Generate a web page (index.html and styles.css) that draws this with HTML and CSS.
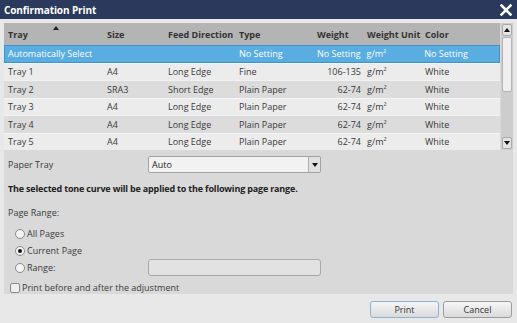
FILE: index.html
```html
<!DOCTYPE html>
<html>
<head>
<meta charset="utf-8">
<link rel="stylesheet" href="styles.css">
</head>
<body>
<div class="dialog">
  <div class="titlebar">
    <span class="title">Confirmation Print</span>
    <svg class="close" width="12" height="12" viewBox="0 0 12 12"><path d="M1.5 1.5 L10.5 10.5 M10.5 1.5 L1.5 10.5" stroke="#fff" stroke-width="2.6" stroke-linecap="square"/></svg>
  </div>
  <div class="body">
    <div class="panel">
      <div class="tablearea">
        <div class="table">
          <div class="row head">
            <div class="c c1">Tray<span class="sort"></span></div>
            <div class="c c2">Size</div>
            <div class="c c3">Feed Direction</div>
            <div class="c c4">Type</div>
            <div class="c c5 hw">Weight</div>
            <div class="c c6">Weight Unit</div>
            <div class="c c7">Color</div>
          </div>
          <div class="row sel">
            <div class="c c1">Automatically Select</div>
            <div class="c c2"></div>
            <div class="c c3"></div>
            <div class="c c4">No Setting</div>
            <div class="c c5 num">No Setting</div>
            <div class="c c6">g/m²</div>
            <div class="c c7">No Setting</div>
          </div>
          <div class="row light">
            <div class="c c1">Tray 1</div><div class="c c2">A4</div><div class="c c3">Long Edge</div><div class="c c4">Fine</div><div class="c c5 num">106-135</div><div class="c c6">g/m²</div><div class="c c7">White</div>
          </div>
          <div class="row dark">
            <div class="c c1">Tray 2</div><div class="c c2">SRA3</div><div class="c c3">Short Edge</div><div class="c c4">Plain Paper</div><div class="c c5 num">62-74</div><div class="c c6">g/m²</div><div class="c c7">White</div>
          </div>
          <div class="row light">
            <div class="c c1">Tray 3</div><div class="c c2">A4</div><div class="c c3">Long Edge</div><div class="c c4">Plain Paper</div><div class="c c5 num">62-74</div><div class="c c6">g/m²</div><div class="c c7">White</div>
          </div>
          <div class="row dark">
            <div class="c c1">Tray 4</div><div class="c c2">A4</div><div class="c c3">Long Edge</div><div class="c c4">Plain Paper</div><div class="c c5 num">62-74</div><div class="c c6">g/m²</div><div class="c c7">White</div>
          </div>
          <div class="row light">
            <div class="c c1">Tray 5</div><div class="c c2">A4</div><div class="c c3">Long Edge</div><div class="c c4">Plain Paper</div><div class="c c5 num">62-74</div><div class="c c6">g/m²</div><div class="c c7">White</div>
          </div>
        </div>
        <div class="scrollbar">
          <div class="sbtn"><span class="tri up"></span></div>
          <div class="thumb"></div>
          <div class="track"></div>
          <div class="sbtn"><span class="tri down"></span></div>
        </div>
      </div>
      <div class="form">
        <div class="line tray">
          <span class="label">Paper Tray</span>
          <div class="select"><span class="val">Auto</span><span class="arrow"><span class="tri down"></span></span></div>
        </div>
        <div class="note">The selected tone curve will be applied to the following page range.</div>
        <div class="pr">Page Range:</div>
        <div class="radio first"><span class="dot"></span>All Pages</div>
        <div class="radio"><span class="dot on"></span>Current Page</div>
        <div class="radio"><span class="rl"><span class="dot"></span>Range:</span><span class="input"></span></div>
        <div class="check"><span class="box"></span>Print before and after the adjustment</div>
      </div>
    </div>
    <div class="buttons">
      <button class="btn primary">Print</button>
      <button class="btn">Cancel</button>
    </div>
  </div>
</div>
</body>
</html>
```

FILE: styles.css
```css
* { box-sizing: border-box; }
html, body { margin: 0; padding: 0; }
body {
  width: 517px;
  height: 323px;
  overflow: hidden;
  background: #e8e8e8;
  font-family: "Open Sans", "Noto Sans", sans-serif;
  font-size: 9px;
  color: #3a3a3a;
}
.dialog { display: flex; flex-direction: column; height: 323px; }
.titlebar {
  height: 19px;
  background: #2b3a5c;
  color: #fff;
  display: flex;
  align-items: center;
  justify-content: space-between;
  padding: 0 5px 0 4px;
}
.title { font-weight: 700; font-size: 10px; letter-spacing: -0.1px; }
.close { display: block; }
.body { padding: 4px 4px 0 4px; flex: 1; display: flex; flex-direction: column; }
.panel { background: #d9d9d9; height: 271px; }
.tablearea { display: flex; gap: 1px; }
.table { width: 496px; }
.row { display: flex; height: 17.5px; align-items: center; }
.row.head { height: 22px; background: #b4b4b4; font-weight: 700; color: #333; position: relative; }
.row.sel { background: #59ade0; color: #fff; border: 1px solid #3f93cc; }
.row.light { background: #ececec; border-top: 1px solid #f6f6f6; }
.row.dark { background: #dcdcdc; border-top: 1px solid #f2f2f2; }
.c { padding-left: 4px; white-space: nowrap; }
.c1 { width: 99px; }
.c2 { width: 61px; }
.c3 { width: 71px; }
.c4 { width: 78px; }
.c5 { width: 50px; }
.c5.num { text-align: right; padding-left: 0; padding-right: 2px; }
.c6 { width: 58px; }
.c7 { width: 79px; }
.sel .c1 { padding-left: 3px; }
.sort {
  position: absolute;
  left: 49px;
  top: 3px;
  width: 0; height: 0;
  border-left: 3.5px solid transparent;
  border-right: 3.5px solid transparent;
  border-bottom: 4px solid #222;
}
.scrollbar {
  width: 13px;
  height: 127px;
  background: #cdcdcd;
  display: flex;
  flex-direction: column;
  padding: 1px;
  gap: 1px;
}
.sbtn {
  height: 12px;
  background: #e4e4e4;
  border: 1px solid #a9a9a9;
  border-radius: 2px;
  display: flex;
  align-items: center;
  justify-content: center;
}
.thumb {
  height: 55px;
  background: #efefef;
  border: 1px solid #b4b4b4;
  border-radius: 2px;
}
.track { flex: 1; }
.tri { width: 0; height: 0; border-left: 3px solid transparent; border-right: 3px solid transparent; }
.tri.up { border-bottom: 4px solid #111; }
.tri.down { border-top: 4px solid #111; }
.form { padding: 6px 0 0 4px; }
.line.tray { display: flex; align-items: center; height: 17px; }
.label { width: 140px; }
.select {
  width: 173px;
  height: 17px;
  background: #f2f2f2;
  border: 1px solid #a3a3a3;
  border-radius: 2px;
  display: flex;
  align-items: center;
  justify-content: space-between;
}
.val { padding-left: 3px; color: #222; }
.arrow {
  width: 12px;
  height: 15px;
  border-left: 1px solid #b0b0b0;
  background: #e0e0e0;
  display: flex;
  align-items: center;
  justify-content: center;
}
.note { font-weight: 700; color: #222; margin-top: 8px; height: 16px; line-height: 16px; letter-spacing: -0.18px; }
.pr { margin-top: 8px; height: 16px; line-height: 16px; }
.radio { display: flex; align-items: center; height: 17px; padding-left: 7px; }
.radio.first { margin-top: 4px; }
.dot {
  width: 10px; height: 10px;
  border-radius: 50%;
  border: 1px solid #8a8a8a;
  background: #f4f4f4;
  margin-right: 2px;
  display: flex;
  align-items: center;
  justify-content: center;
}
.dot.on::after { content: ""; width: 4px; height: 4px; border-radius: 50%; background: #111; }
.rl { display: flex; align-items: center; width: 133px; }
.input {
  width: 173px;
  height: 17px;
  background: #e2e2e2;
  border: 1px solid #a8a8a8;
  border-radius: 3px;
}
.check { display: flex; align-items: center; height: 17px; margin-top: 3px; padding-left: 3px; margin-left: -1px; }
.box {
  width: 10px; height: 10px;
  border: 1px solid #8a8a8a;
  background: #f0f0f0;
  border-radius: 2px;
  margin-right: 2px;
}
.buttons { display: flex; justify-content: flex-end; gap: 4px; padding-top: 7px; padding-right: 1px; }
.btn {
  width: 69px;
  height: 17px;
  font-family: inherit;
  font-size: 9px;
  color: #333;
  background: linear-gradient(#f6f6f6, #dadada);
  border: 1px solid #9c9c9c;
  border-radius: 3px;
  padding: 0;
}
.btn.primary { border-color: #8eafd8; }
```
